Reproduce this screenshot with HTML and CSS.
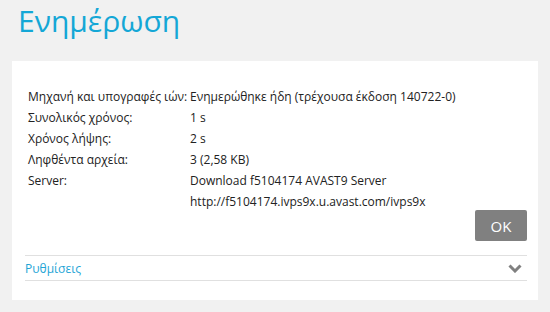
FILE: index.html
```html
<!DOCTYPE html>
<html lang="el">
<head>
    <meta charset="UTF-8">
    <title>Ενημέρωση</title>
    <link rel="stylesheet" href="styles.css">
</head>
<body>
    <h1 class="title">Ενημέρωση</h1>
    <div class="card">
        <div class="info">
            <div class="label">Μηχανή και υπογραφές ιών:</div>
            <div class="value">Ενημερώθηκε ήδη (τρέχουσα έκδοση 140722-0)</div>
            <div class="label">Συνολικός χρόνος:</div>
            <div class="value">1 s</div>
            <div class="label">Χρόνος λήψης:</div>
            <div class="value">2 s</div>
            <div class="label">Ληφθέντα αρχεία:</div>
            <div class="value">3 (2,58 KB)</div>
            <div class="label">Server:</div>
            <div class="value">Download f5104174 AVAST9 Server</div>
            <div class="label"></div>
            <div class="value">http://f5104174.ivps9x.u.avast.com/ivps9x</div>
        </div>
        <div class="actions">
            <button class="btn">OK</button>
        </div>
        <div class="settings">
            <span>Ρυθμίσεις</span>
            <svg class="chevron" width="14" height="9" viewBox="0 0 14 9">
                <path d="M1.5 1.5 L7 7 L12.5 1.5" fill="none" stroke="#808080" stroke-width="3"/>
            </svg>
        </div>
    </div>
</body>
</html>
```

FILE: styles.css
```css
body {
    margin: 0;
    background: #f1f1f1;
    font-family: "Open Sans", Arial, sans-serif;
    color: #222;
}
.title {
    margin: 0;
    padding: 0 0 0 18px;
    height: 61px;
    box-sizing: border-box;
    font-size: 30px;
    font-weight: normal;
    color: #14a7d6;
}
.card {
    margin-left: 12px;
    width: 526px;
    height: 239px;
    box-sizing: border-box;
    padding: 25px 11px 0 13px;
    background: white;
}
.info {
    display: grid;
    grid-template-columns: 162px auto;
    padding-left: 3px;
    font-size: 12px;
    line-height: 21px;
}
.actions {
    display: flex;
    justify-content: flex-end;
    margin-top: -2px;
}
.btn {
    width: 52px;
    height: 31px;
    border: none;
    border-radius: 2px;
    background: #808080;
    color: white;
    font-family: "Open Sans", Arial, sans-serif;
    font-size: 15px;
    padding: 0;
}
.settings {
    display: flex;
    justify-content: space-between;
    align-items: center;
    margin-top: 14px;
    height: 24px;
    border-top: 1px solid #e0e0e0;
    border-bottom: 1px solid #e0e0e0;
    font-size: 12px;
    color: #1fa5d6;
}
.chevron {
    margin-right: 5px;
}
```
